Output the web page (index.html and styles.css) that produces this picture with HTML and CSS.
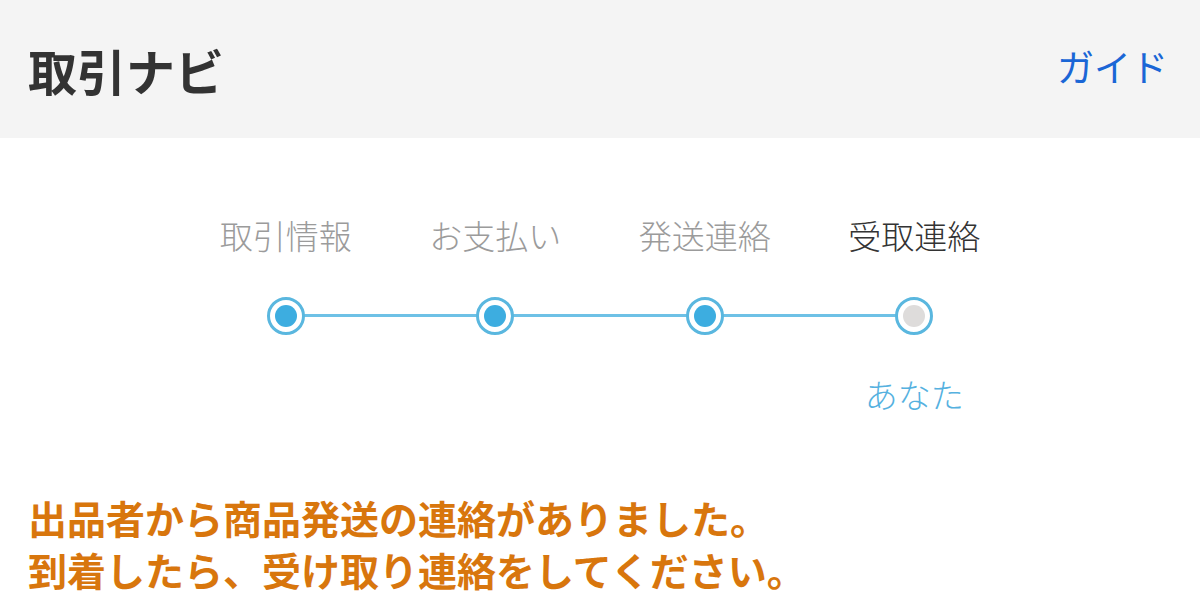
FILE: index.html
```html
<!DOCTYPE html>
<html lang="ja">
  <head>
    <meta charset="UTF-8" />
    <meta name="viewport" content="width=device-width, initial-scale=1.0" />
    <title>取引ナビ</title>
    <link rel="stylesheet" href="styles.css">
  </head>
  <body>
    <header class="navi-head">
      <h1 class="navi-title">取引ナビ</h1>
      <a class="guide-link" href="#">ガイド</a>
    </header>
    <main class="navi-body">
      <ol class="steps">
        <li class="step done">
          <span class="step-label">取引情報</span>
          <span class="step-dot"></span>
        </li>
        <li class="step done">
          <span class="step-label">お支払い</span>
          <span class="step-dot"></span>
        </li>
        <li class="step done">
          <span class="step-label">発送連絡</span>
          <span class="step-dot"></span>
        </li>
        <li class="step current">
          <span class="step-label">受取連絡</span>
          <span class="step-dot"></span>
          <span class="step-who">あなた</span>
        </li>
      </ol>
      <p class="notice">
        出品者から商品発送の連絡がありました。<br />
        到着したら、受け取り連絡をしてください。
      </p>
    </main>
  </body>
</html>
```

FILE: styles.css
```css
html {
  font-family: "Noto Sans CJK JP", "Noto Sans", sans-serif;
}
body {
  margin: 0;
  padding: 0;
  background: #fff;
  width: 1200px;
  height: 612px;
  overflow: hidden;
}
.navi-head {
  height: 138px;
  background: #f4f4f4;
  display: flex;
  align-items: center;
  justify-content: space-between;
  padding: 0 32px 0 28px;
}
.navi-title {
  margin: 0;
  font-size: 49px;
  font-weight: 700;
  color: #333;
  line-height: 1;
}
.guide-link {
  font-size: 37px;
  color: #1a66d6;
  text-decoration: none;
  line-height: 1;
  margin-top: -6px;
}
.navi-body {
  padding-top: 81px;
}
.steps {
  list-style: none;
  margin: 0 auto;
  padding: 0;
  width: 838px;
  display: grid;
  grid-template-columns: repeat(4, 1fr);
}
.step {
  display: flex;
  flex-direction: column;
  align-items: center;
  position: relative;
}
.step-label {
  font-size: 33px;
  font-weight: 300;
  line-height: 1;
  color: #9b9b9b;
  white-space: nowrap;
}
.step.current .step-label {
  color: #333;
}
.step-dot {
  margin-top: 45px;
  width: 32px;
  height: 32px;
  border: 3px solid #5ab7df;
  border-radius: 50%;
  background: #fff;
  display: flex;
  align-items: center;
  justify-content: center;
  position: relative;
  z-index: 1;
}
.step-dot::after {
  content: "";
  width: 22px;
  height: 22px;
  border-radius: 50%;
  background: #3dade0;
}
.step.current .step-dot::after {
  background: #dedcdb;
}
/* connector line to the next step */
.step:not(:last-child)::after {
  content: "";
  position: absolute;
  top: 95px;
  left: 50%;
  width: 100%;
  height: 3px;
  background: #6ec1e6;
}
.step-who {
  margin-top: 43px;
  font-size: 33px;
  font-weight: 300;
  line-height: 1;
  color: #55b1df;
}
.notice {
  margin: 80px 0 0 28px;
  font-size: 39px;
  font-weight: 700;
  line-height: 52px;
  color: #d8760d;
  white-space: nowrap;
}
```
